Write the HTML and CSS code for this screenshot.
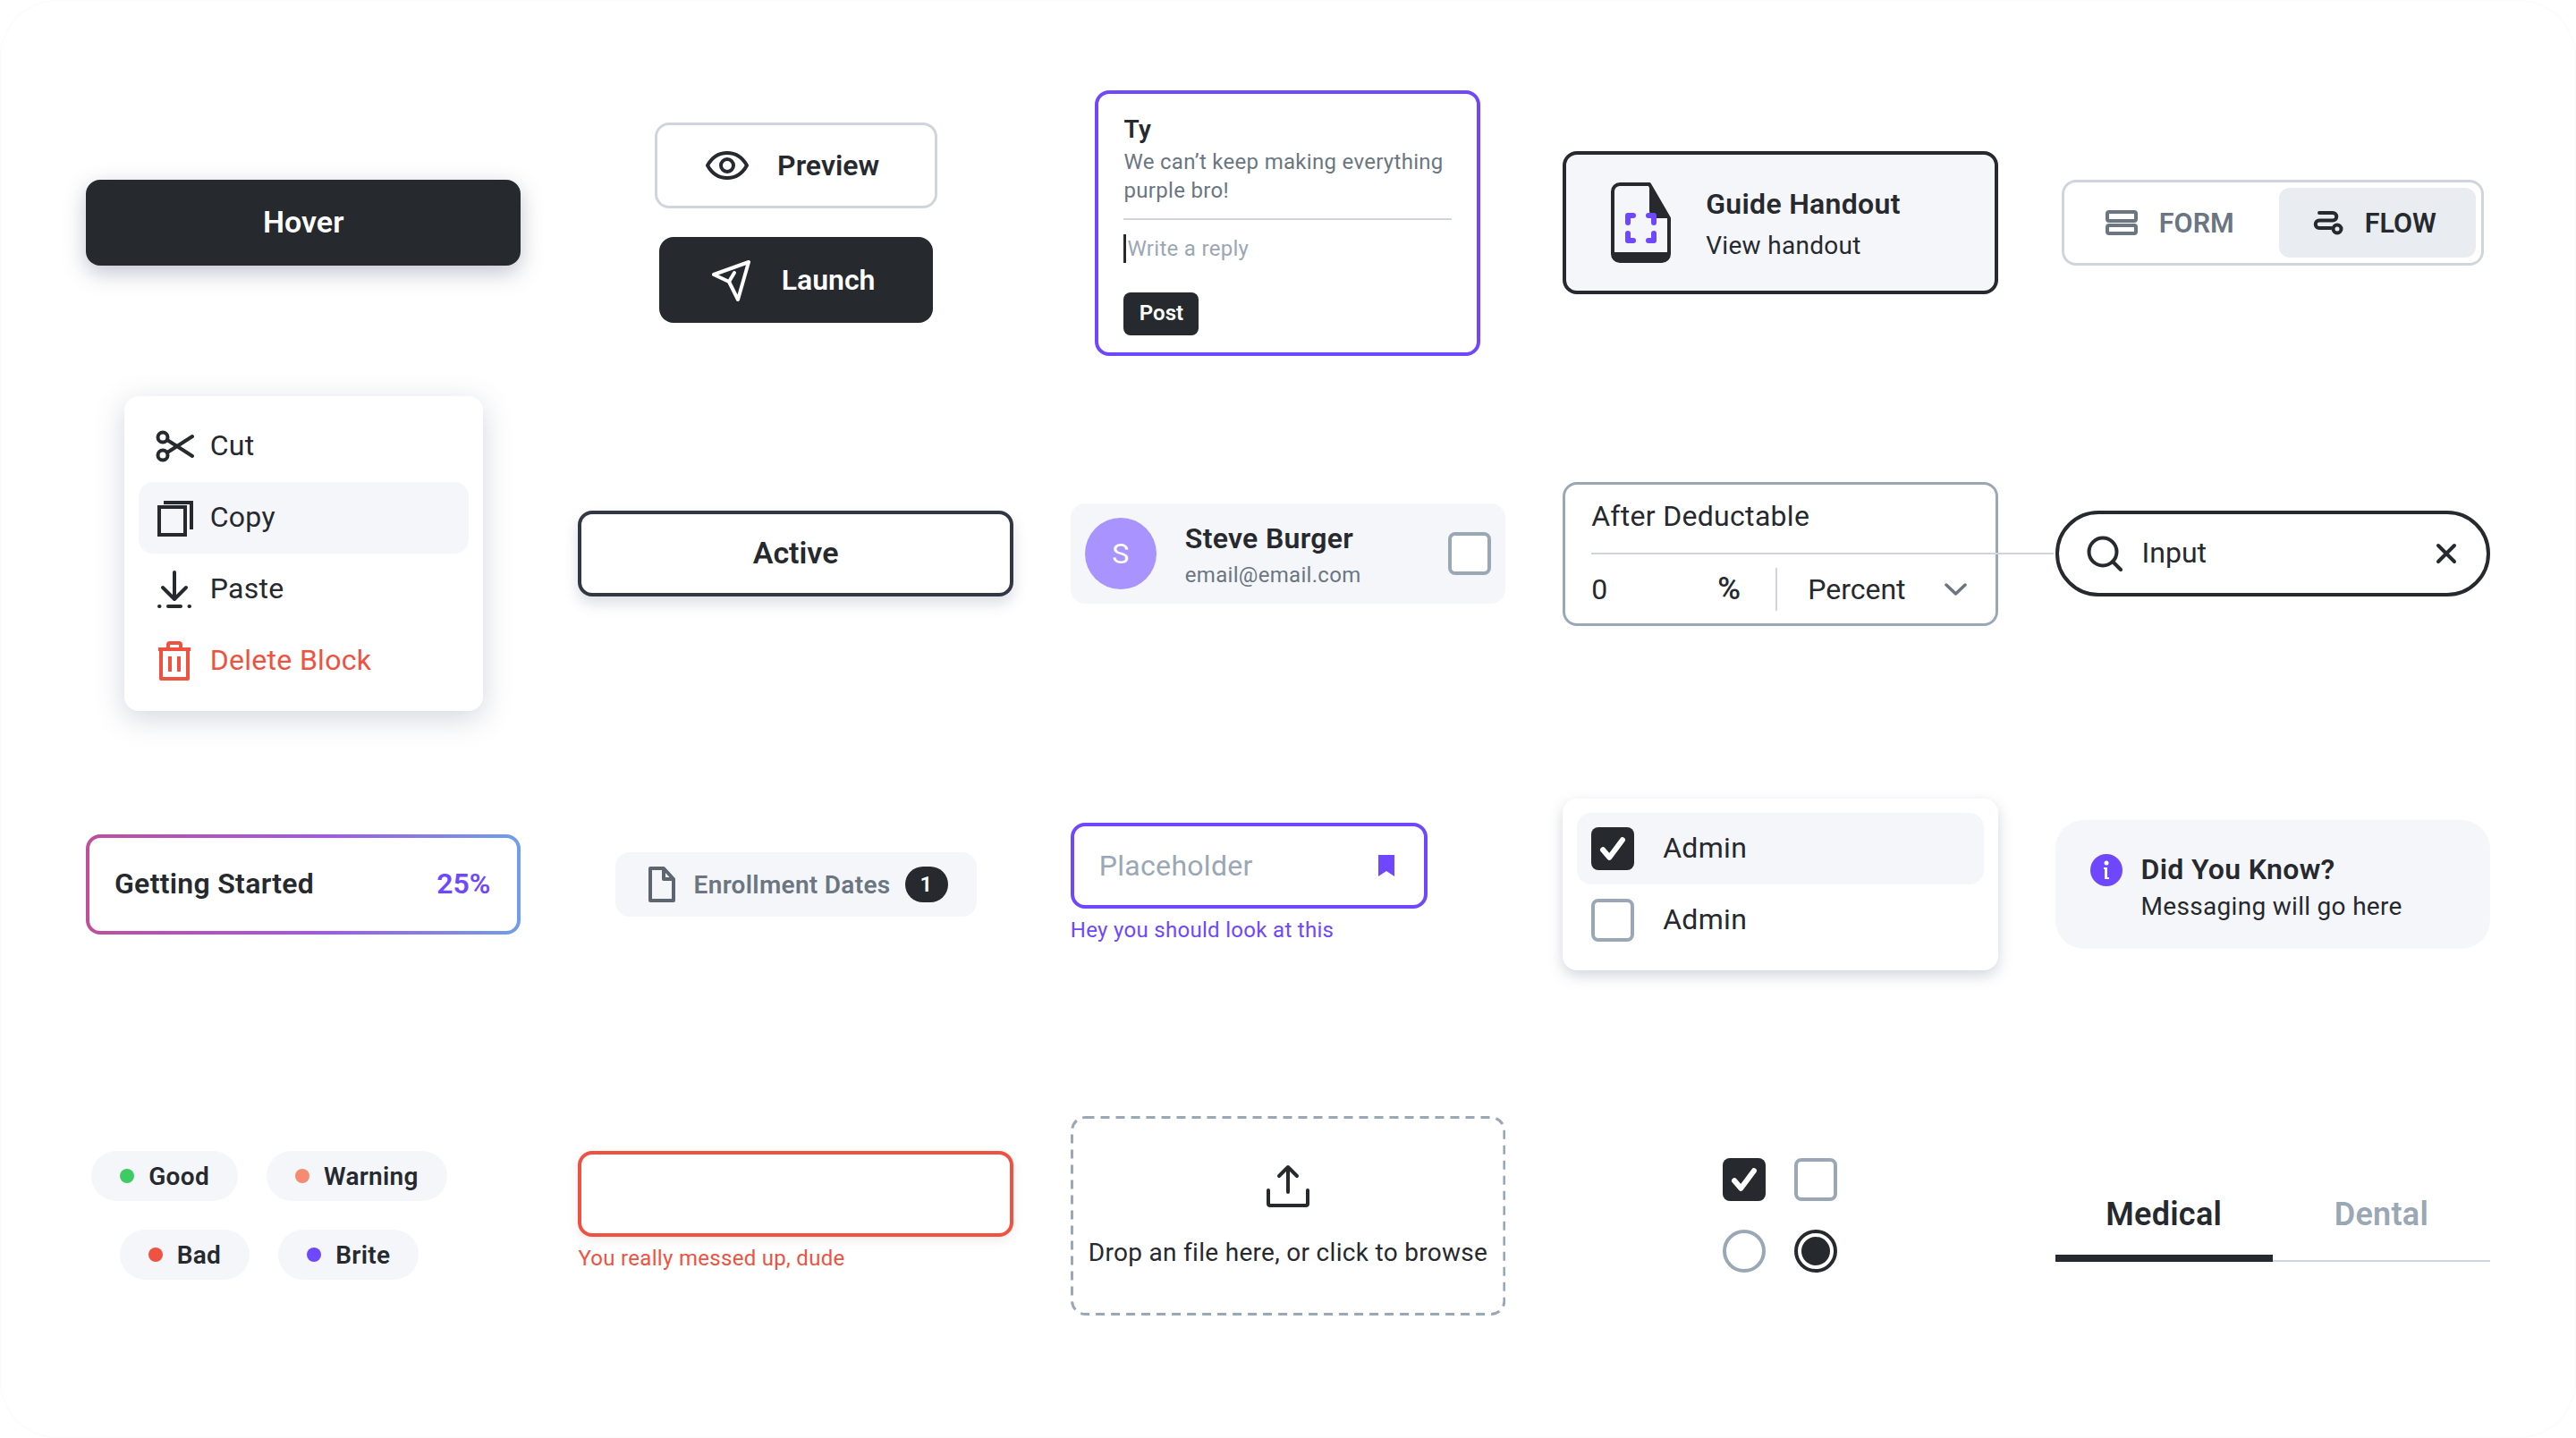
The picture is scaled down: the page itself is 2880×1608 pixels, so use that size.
FILE: index.html
```html
<!DOCTYPE html>
<html lang="en">
<head>
    <meta charset="UTF-8">
    <meta name="viewport" content="width=device-width, initial-scale=1.0">
    <title>Components</title>
    <link rel="stylesheet" href="styles.css">
</head>
<body>
    <div class="board">

        <!-- Row 1 -->
        <div class="cell">
            <button class="btn btn-dark btn-hover">Hover</button>
        </div>

        <div class="cell cell-stack">
            <button class="btn btn-outline btn-preview">
                <svg class="icon" width="48" height="48" viewBox="0 0 48 48" fill="none" stroke="#26292e" stroke-width="4" stroke-linecap="round" stroke-linejoin="round">
                    <path d="M2 24c5-9 13-14 22-14s17 5 22 14c-5 9-13 14-22 14S7 33 2 24z"/>
                    <circle cx="24" cy="24" r="7"/>
                </svg>
                Preview
            </button>
            <button class="btn btn-dark btn-launch">
                <svg class="icon" width="48" height="48" viewBox="0 0 48 48" fill="none" stroke="#fff" stroke-width="4" stroke-linecap="round" stroke-linejoin="round">
                    <path d="M43 4L4 18l17 8 10 20z"/>
                    <path d="M21 26l6-10"/>
                </svg>
                Launch
            </button>
        </div>

        <div class="cell">
            <div class="reply-card">
                <div class="reply-name">Ty</div>
                <div class="reply-text">We can’t keep making everything purple bro!</div>
                <div class="reply-input"><span class="caret"></span>Write a reply</div>
                <button class="btn-post">Post</button>
            </div>
        </div>

        <div class="cell">
            <div class="handout">
                <svg class="icon" width="67" height="90" viewBox="0 0 67 90" fill="none">
                    <path d="M10 2h33l22 38v40a8 8 0 0 1-8 8H10a8 8 0 0 1-8-8V10a8 8 0 0 1 8-8z" stroke="#26292e" stroke-width="4" stroke-linejoin="round"/>
                    <path d="M43 2l22 38H51a8 8 0 0 1-8-8z" fill="#26292e"/>
                    <path d="M2 78h63v4a7 7 0 0 1-7 7H9a7 7 0 0 1-7-7z" fill="#26292e"/>
                    <path d="M19 45v-8h6M42 37h6v8M19 57v8h6M42 65h6v-8" stroke="#6e47ff" stroke-width="6" stroke-linecap="round" stroke-linejoin="round"/>
                </svg>
                <div class="handout-info">
                    <div class="handout-title">Guide Handout</div>
                    <div class="handout-sub">View handout</div>
                </div>
            </div>
        </div>

        <div class="cell">
            <div class="toggle">
                <div class="toggle-item">
                    <svg class="icon" width="36" height="28" viewBox="0 0 36 28" fill="none" stroke="#6b7682" stroke-width="4" stroke-linejoin="round">
                        <rect x="2" y="2" width="32" height="10" rx="2"/>
                        <rect x="2" y="17" width="32" height="9" rx="2"/>
                    </svg>
                    FORM
                </div>
                <div class="toggle-item toggle-active">
                    <svg class="icon" width="34" height="28" viewBox="0 0 34 28" fill="none" stroke="#26292e" stroke-width="4" stroke-linecap="round">
                        <path d="M7 3H22a4.25 4.25 0 0 1 0 8.5H7a4.25 4.25 0 0 0 0 8.5H20"/>
                        <circle cx="27" cy="21" r="4.5"/>
                    </svg>
                    FLOW
                </div>
            </div>
        </div>

        <!-- Row 2 -->
        <div class="cell">
            <div class="menu">
                <div class="menu-item">
                    <svg class="icon" width="48" height="48" viewBox="0 0 48 48" fill="none" stroke="#26292e" stroke-width="4" stroke-linecap="round" stroke-linejoin="round">
                        <circle cx="11" cy="14" r="5.5"/>
                        <circle cx="11" cy="34" r="5.5"/>
                        <path d="M16 17l28 18M16 31l28-18"/>
                    </svg>
                    Cut
                </div>
                <div class="menu-item menu-item-on">
                    <svg class="icon" width="48" height="48" viewBox="0 0 48 48" fill="none" stroke="#26292e" stroke-width="4">
                        <rect x="7" y="12" width="29" height="31"/>
                        <path d="M12 7h31v30"/>
                    </svg>
                    Copy
                </div>
                <div class="menu-item">
                    <svg class="icon" width="48" height="48" viewBox="0 0 48 48" fill="none" stroke="#26292e" stroke-width="4" stroke-linecap="round" stroke-linejoin="round">
                        <path d="M24 5v29M11 22l13 13 13-13"/>
                        <path d="M7 43h.5M17 43h14M40.5 43h.5"/>
                    </svg>
                    Paste
                </div>
                <div class="menu-item menu-item-danger">
                    <svg class="icon" width="48" height="48" viewBox="0 0 48 48" fill="none" stroke="#ef5240" stroke-width="4" stroke-linejoin="round">
                        <path d="M6 11h36M17 11V6a2 2 0 0 1 2-2h10a2 2 0 0 1 2 2v5"/>
                        <path d="M9 11h30v33H9z"/>
                        <path d="M19 19v17M29 19v17"/>
                    </svg>
                    Delete Block
                </div>
            </div>
        </div>

        <div class="cell">
            <button class="btn btn-active">Active</button>
        </div>

        <div class="cell">
            <div class="person">
                <div class="avatar">S</div>
                <div class="person-info">
                    <div class="person-name">Steve Burger</div>
                    <div class="person-mail">email@email.com</div>
                </div>
                <span class="check person-check"></span>
            </div>
        </div>

        <div class="cell">
            <div class="deduct">
                <div class="deduct-label">After Deductable</div>
                <div class="deduct-row">
                    <span class="deduct-value">0</span>
                    <span class="deduct-unit">%</span>
                    <span class="deduct-sep"></span>
                    <span class="deduct-type">Percent</span>
                    <svg class="icon" width="25" height="14" viewBox="0 0 25 14" fill="none" stroke="#6b7682" stroke-width="3.5" stroke-linecap="round" stroke-linejoin="round">
                        <path d="M2 2l10.5 10L23 2"/>
                    </svg>
                </div>
            </div>
        </div>

        <div class="cell">
            <div class="search">
                <svg class="icon" width="40" height="40" viewBox="0 0 40 40" fill="none" stroke="#26292e" stroke-width="4" stroke-linecap="round">
                    <circle cx="18" cy="18" r="15.5"/>
                    <path d="M29 29l9 9"/>
                </svg>
                <span class="search-text">Input</span>
                <svg class="icon" width="24" height="24" viewBox="0 0 24 24" fill="none" stroke="#26292e" stroke-width="4" stroke-linecap="round">
                    <path d="M3 3l18 18M21 3L3 21"/>
                </svg>
            </div>
        </div>

        <!-- Row 3 -->
        <div class="cell">
            <div class="progress">
                <span>Getting Started</span>
                <span class="progress-num">25%</span>
            </div>
        </div>

        <div class="cell">
            <div class="chip">
                <svg class="icon" width="32" height="40" viewBox="0 0 32 40" fill="none" stroke="#5d6670" stroke-width="4" stroke-linejoin="round">
                    <path d="M3 2h15l11 12v24H3z"/>
                    <path d="M18 2v12h11"/>
                </svg>
                <span class="chip-text">Enrollment Dates</span>
                <span class="chip-count">1</span>
            </div>
        </div>

        <div class="cell cell-field">
            <div class="field">
                <span class="field-text">Placeholder</span>
                <svg class="icon" width="20" height="26" viewBox="0 0 20 26" fill="#6e47ff">
                    <path d="M1 1h18v24l-9-6-9 6z"/>
                </svg>
            </div>
            <div class="field-help">Hey you should look at this</div>
        </div>

        <div class="cell">
            <div class="menu menu-admin">
                <div class="menu-item menu-item-on menu-item-check">
                    <span class="check check-on">
                        <svg width="34" height="34" viewBox="0 0 28 28" fill="none" stroke="#fff" stroke-width="5" stroke-linecap="round" stroke-linejoin="round"><path d="M5 15l6 7L23 6"/></svg>
                    </span>
                    Admin
                </div>
                <div class="menu-item menu-item-check">
                    <span class="check"></span>
                    Admin
                </div>
            </div>
        </div>

        <div class="cell">
            <div class="notice">
                <svg class="icon notice-icon" width="36" height="36" viewBox="0 0 36 36">
                    <circle cx="18" cy="18" r="18" fill="#6e47ff"/>
                    <circle cx="18" cy="10" r="2.5" fill="#fff"/>
                    <path d="M15 15h4v11h2v2h-5V17h-1z" fill="#fff"/>
                </svg>
                <div>
                    <div class="notice-title">Did You Know?</div>
                    <div class="notice-text">Messaging will go here</div>
                </div>
            </div>
        </div>

        <!-- Row 4 -->
        <div class="cell cell-left">
            <div class="status-list">
                <span class="status"><i class="dot dot-good"></i>Good</span>
                <span class="status"><i class="dot dot-warn"></i>Warning</span>
                <span class="status"><i class="dot dot-bad"></i>Bad</span>
                <span class="status"><i class="dot dot-brite"></i>Brite</span>
            </div>
        </div>

        <div class="cell cell-field cell-error">
            <div class="field field-error"></div>
            <div class="field-help field-help-error">You really messed up, dude</div>
        </div>

        <div class="cell">
            <div class="drop">
                <svg class="drop-dash" fill="none">
                    <rect rx="15" ry="15"/>
                </svg>
                <svg class="icon" width="48" height="48" viewBox="0 0 48 48" fill="none" stroke="#26292e" stroke-width="4" stroke-linecap="round" stroke-linejoin="round">
                    <path d="M24 31V3M14 13L24 3l10 10"/>
                    <path d="M2 29v15a2 2 0 0 0 2 2h40a2 2 0 0 0 2-2V29"/>
                </svg>
                <div class="drop-text">Drop an file here, or click to browse</div>
            </div>
        </div>

        <div class="cell">
            <div class="controls">
                <span class="check check-on">
                    <svg width="34" height="34" viewBox="0 0 28 28" fill="none" stroke="#fff" stroke-width="5" stroke-linecap="round" stroke-linejoin="round"><path d="M5 15l6 7L23 6"/></svg>
                </span>
                <span class="check"></span>
                <span class="radio"></span>
                <span class="radio radio-on"></span>
            </div>
        </div>

        <div class="cell">
            <div class="tabs">
                <div class="tab tab-on">Medical</div>
                <div class="tab">Dental</div>
            </div>
        </div>
    </div>
</body>
</html>
```

FILE: styles.css
```css
* {
    box-sizing: border-box;
}

body {
    margin: 0;
    background-color: #fff;
    color: #26292e;
    font-family: Roboto, "Liberation Sans", sans-serif;
    letter-spacing: 0.3px;
}

.board {
    width: 2880px;
    height: 1608px;
    padding: 0 96px;
    display: grid;
    grid-template-columns: repeat(5, 1fr);
    grid-auto-rows: 370px;
    column-gap: 64px;
    align-content: center;
    border-radius: 64px;
    box-shadow: inset 0 0 0 1px #fafafa;
}

.cell {
    display: flex;
    align-items: center;
    justify-content: center;
}

.cell-stack {
    flex-direction: column;
    gap: 32px;
}

.cell-field {
    flex-direction: column;
    align-items: flex-start;
    padding-bottom: 2px;
}

.cell-error {
    padding-bottom: 9px;
}

.cell-left {
    justify-content: flex-start;
}

.icon {
    flex-shrink: 0;
}

/* Buttons */
.btn {
    height: 96px;
    border-radius: 16px;
    font-family: inherit;
    font-size: 32px;
    font-weight: 600;
    letter-spacing: 0;
    display: flex;
    align-items: center;
    justify-content: center;
    padding: 0;
}

.btn-dark {
    background-color: #26292e;
    border: none;
    color: #fff;
}

.btn-hover {
    width: 100%;
    font-size: 34px;
    padding-bottom: 2px;
    box-shadow: 0 8px 24px rgba(80, 90, 120, 0.35);
}

.btn-outline {
    background-color: #fff;
    border: 3px solid #d0d5dd;
    color: #26292e;
}

.btn-preview {
    width: 316px;
    gap: 32px;
    padding-right: 7px;
}

.btn-launch {
    width: 306px;
    gap: 32px;
    padding-right: 7px;
}

.btn-active {
    width: 100%;
    background-color: #fff;
    border: 4px solid #323843;
    color: #26292e;
    font-size: 34px;
    padding-bottom: 3px;
    box-shadow: 0 8px 16px rgba(80, 90, 120, 0.2);
}

/* Reply card */
.reply-card {
    width: 431px;
    border: 4px solid #6e47ff;
    border-radius: 16px;
    padding: 24px 28px 19px;
}

.reply-name {
    font-size: 28px;
    font-weight: 600;
    line-height: 32px;
    margin-bottom: 4px;
}

.reply-text {
    font-size: 24px;
    line-height: 32px;
    color: #6b7682;
    padding-bottom: 15px;
    border-bottom: 2px solid #d0d5dd;
}

.reply-input {
    display: flex;
    align-items: center;
    font-size: 24px;
    line-height: 32px;
    color: #9aa7b5;
    margin-top: 16px;
}

.caret {
    width: 3px;
    height: 32px;
    background-color: #26292e;
    margin-right: 1px;
}

.btn-post {
    display: block;
    width: 84px;
    height: 48px;
    margin-top: 33px;
    padding: 0 0 2px;
    background-color: #26292e;
    border: none;
    border-radius: 8px;
    color: #fff;
    font-family: inherit;
    font-size: 24px;
    font-weight: 600;
}

/* Handout */
.handout {
    width: 100%;
    height: 160px;
    display: flex;
    align-items: center;
    gap: 39px;
    padding: 0 50px;
    background-color: #f5f6fa;
    border: 4px solid #26292e;
    border-radius: 16px;
}

.handout-info {
    padding-top: 5px;
}

.handout-title {
    font-size: 32px;
    font-weight: 600;
    line-height: 40px;
}

.handout-sub {
    font-size: 28px;
    line-height: 40px;
    margin-top: 7px;
}

/* Form / flow toggle */
.toggle {
    width: 472px;
    height: 96px;
    display: flex;
    padding: 6px;
    border: 3px solid #d0d5dd;
    border-radius: 16px;
    letter-spacing: 0;
}

.toggle-item {
    flex: 1;
    display: flex;
    align-items: center;
    justify-content: center;
    gap: 24px;
    padding-right: 10px;
    border-radius: 12px;
    font-size: 30.5px;
    font-weight: 600;
    color: #6b7682;
}

.toggle-active {
    flex: 0 0 220px;
    padding-right: 6px;
    background-color: #e9ecf0;
    color: #26292e;
}

/* Context menu */
.menu {
    width: 401px;
    padding: 16px;
    background-color: #fff;
    border-radius: 16px;
    box-shadow: 0 8px 32px rgba(80, 90, 120, 0.25);
}

.menu-item {
    height: 80px;
    display: flex;
    align-items: center;
    gap: 16px;
    padding: 0 16px 2px;
    border-radius: 16px;
    font-size: 32px;
}

.menu-item > .icon,
.menu-item > .check {
    margin-top: 2px;
}

.menu-item-on {
    background-color: #f5f6fa;
}

.menu-item-danger {
    color: #ef5240;
}

.menu-admin {
    width: 100%;
    box-shadow: 0 6px 16px rgba(80, 90, 120, 0.25);
}

.menu-item-check {
    gap: 32px;
}

/* Person row */
.person {
    width: 100%;
    height: 112px;
    display: flex;
    align-items: center;
    gap: 32px;
    padding: 0 16px;
    background-color: #f5f6fa;
    border-radius: 16px;
}

.person-info {
    padding-top: 3px;
}

.avatar {
    width: 80px;
    height: 80px;
    display: flex;
    align-items: center;
    justify-content: center;
    border-radius: 50%;
    background-color: #a994ff;
    color: #fff;
    font-size: 32px;
}

.person-name {
    font-size: 32px;
    font-weight: 600;
    line-height: 40px;
}

.person-mail {
    font-size: 24px;
    line-height: 32px;
    margin-top: 5px;
    color: #6b7682;
}

.person-check {
    margin-left: auto;
}

/* Checkbox and radio */
.check {
    width: 48px;
    height: 48px;
    flex-shrink: 0;
    display: flex;
    align-items: center;
    justify-content: center;
    border: 4px solid #9aa7b5;
    border-radius: 8px;
    background-color: #fff;
}

.check-on {
    border: none;
    background-color: #26292e;
}

.radio {
    width: 48px;
    height: 48px;
    border: 4px solid #9aa7b5;
    border-radius: 50%;
    background-color: #fff;
}

.radio-on {
    border-color: #26292e;
    padding: 4px;
    background-color: #26292e;
    background-clip: content-box;
}

.controls {
    display: grid;
    grid-template-columns: 48px 48px;
    gap: 32px;
}

/* Deductable */
.deduct {
    width: 100%;
    height: 161px;
    border: 3px solid #9aa7b5;
    border-radius: 16px;
    padding-left: 29px;
}

.deduct-label {
    height: 78px;
    display: flex;
    align-items: center;
    margin-right: -65px;
    padding-bottom: 5px;
    border-bottom: 2px solid #d0d5dd;
    font-size: 32px;
}

.deduct-row {
    height: 76px;
    display: flex;
    align-items: center;
    padding: 2px 32px 0 0;
    font-size: 32px;
}

.deduct-value {
    width: 141px;
}

.deduct-unit {
    width: 27px;
    font-size: 35px;
    font-weight: 500;
    letter-spacing: 0;
}

.deduct-sep {
    width: 2px;
    height: 48px;
    margin: 0 34px 0 38px;
    background-color: #d0d5dd;
}

.deduct-type {
    flex: 1;
    letter-spacing: 0;
}

/* Search */
.search {
    width: 100%;
    height: 96px;
    display: flex;
    align-items: center;
    gap: 22px;
    padding: 0 33px 0 31px;
    background-color: #fff;
    border: 4px solid #26292e;
    border-radius: 48px;
    font-size: 32px;
    letter-spacing: 0;
}

.search-text {
    flex: 1;
    padding-bottom: 2px;
}

/* Progress */
.progress {
    width: 100%;
    height: 112px;
    display: flex;
    align-items: center;
    justify-content: space-between;
    padding: 0 30px 2px 28px;
    border: 4px solid transparent;
    border-radius: 16px;
    background: linear-gradient(#fff, #fff) padding-box,
        linear-gradient(90deg, #c04f9b, #a058e8 55%, #6f9fe8) border-box;
    font-size: 32px;
    font-weight: 600;
}

.progress-num {
    color: #6e47ff;
    letter-spacing: 0;
}

/* Chip */
.chip {
    width: 404px;
    height: 72px;
    display: flex;
    align-items: center;
    padding: 0 32px 0 36px;
    background-color: #f5f6fa;
    border-radius: 16px;
}

.chip-text {
    flex: 1;
    margin-left: 20px;
    font-size: 28px;
    font-weight: 600;
    color: #6b7682;
}

.chip-count {
    width: 48px;
    height: 40px;
    display: flex;
    align-items: center;
    justify-content: center;
    border-radius: 24px;
    background-color: #26292e;
    color: #fff;
    font-size: 24px;
    font-weight: 600;
}

/* Fields */
.field {
    width: 399px;
    height: 96px;
    display: flex;
    align-items: center;
    justify-content: space-between;
    padding: 0 32px 0 28px;
    background-color: #fff;
    border: 4px solid #6e47ff;
    border-radius: 16px;
    font-size: 32px;
}

.field-text {
    color: #9aa7b5;
}

.field-help {
    margin-top: 8px;
    font-size: 24px;
    line-height: 32px;
    color: #6e47ff;
}

.field-error {
    width: 100%;
    border-color: #ef5240;
    box-shadow: 0 4px 12px rgba(120, 90, 80, 0.12);
}

.field-help-error {
    color: #ef5240;
}

/* Notice */
.notice {
    width: 100%;
    height: 144px;
    display: flex;
    align-items: flex-start;
    gap: 21px;
    padding: 35px 39px 0;
    background-color: #f5f6fa;
    border-radius: 32px;
}

.notice-icon {
    margin-top: 3px;
}

.notice-title {
    font-size: 32px;
    font-weight: 600;
    line-height: 40px;
}

.notice-text {
    margin-top: 2px;
    font-size: 28px;
    line-height: 40px;
}

/* Status pills */
.status-list {
    width: 410px;
    display: flex;
    flex-wrap: wrap;
    justify-content: center;
    gap: 32px;
}

.status {
    height: 56px;
    display: flex;
    align-items: center;
    gap: 16px;
    padding: 0 32px;
    background-color: #f5f6fa;
    border-radius: 28px;
    font-size: 28px;
    font-weight: 600;
}

.dot {
    width: 16px;
    height: 16px;
    border-radius: 50%;
}

.dot-good {
    background-color: #3ecb63;
}

.dot-warn {
    background-color: #f58b72;
}

.dot-bad {
    background-color: #ef5240;
}

.dot-brite {
    background-color: #6e47ff;
}

/* Drop zone */
.drop {
    position: relative;
    width: 100%;
    height: 223px;
    display: flex;
    flex-direction: column;
    align-items: center;
    padding-top: 54px;
}

.drop-dash {
    position: absolute;
    top: 0;
    left: 0;
    width: 100%;
    height: 100%;
}

.drop-dash rect {
    x: 1.5px;
    y: 1.5px;
    width: calc(100% - 3px);
    height: calc(100% - 3px);
    stroke: #9aa7b5;
    stroke-width: 3px;
    stroke-dasharray: 10 7;
}

.drop-text {
    margin-top: 31px;
    font-size: 28px;
    line-height: 40px;
}

/* Tabs */
.tabs {
    width: 100%;
    display: flex;
    border-bottom: 2px solid #d0d5dd;
}

.tab {
    flex: 1;
    height: 104px;
    margin-bottom: -2px;
    display: flex;
    align-items: center;
    justify-content: center;
    padding-top: 6px;
    border-bottom: 8px solid transparent;
    font-size: 36px;
    font-weight: 600;
    color: #9aa7b5;
}

.tab-on {
    color: #26292e;
    border-bottom-color: #26292e;
}
```
